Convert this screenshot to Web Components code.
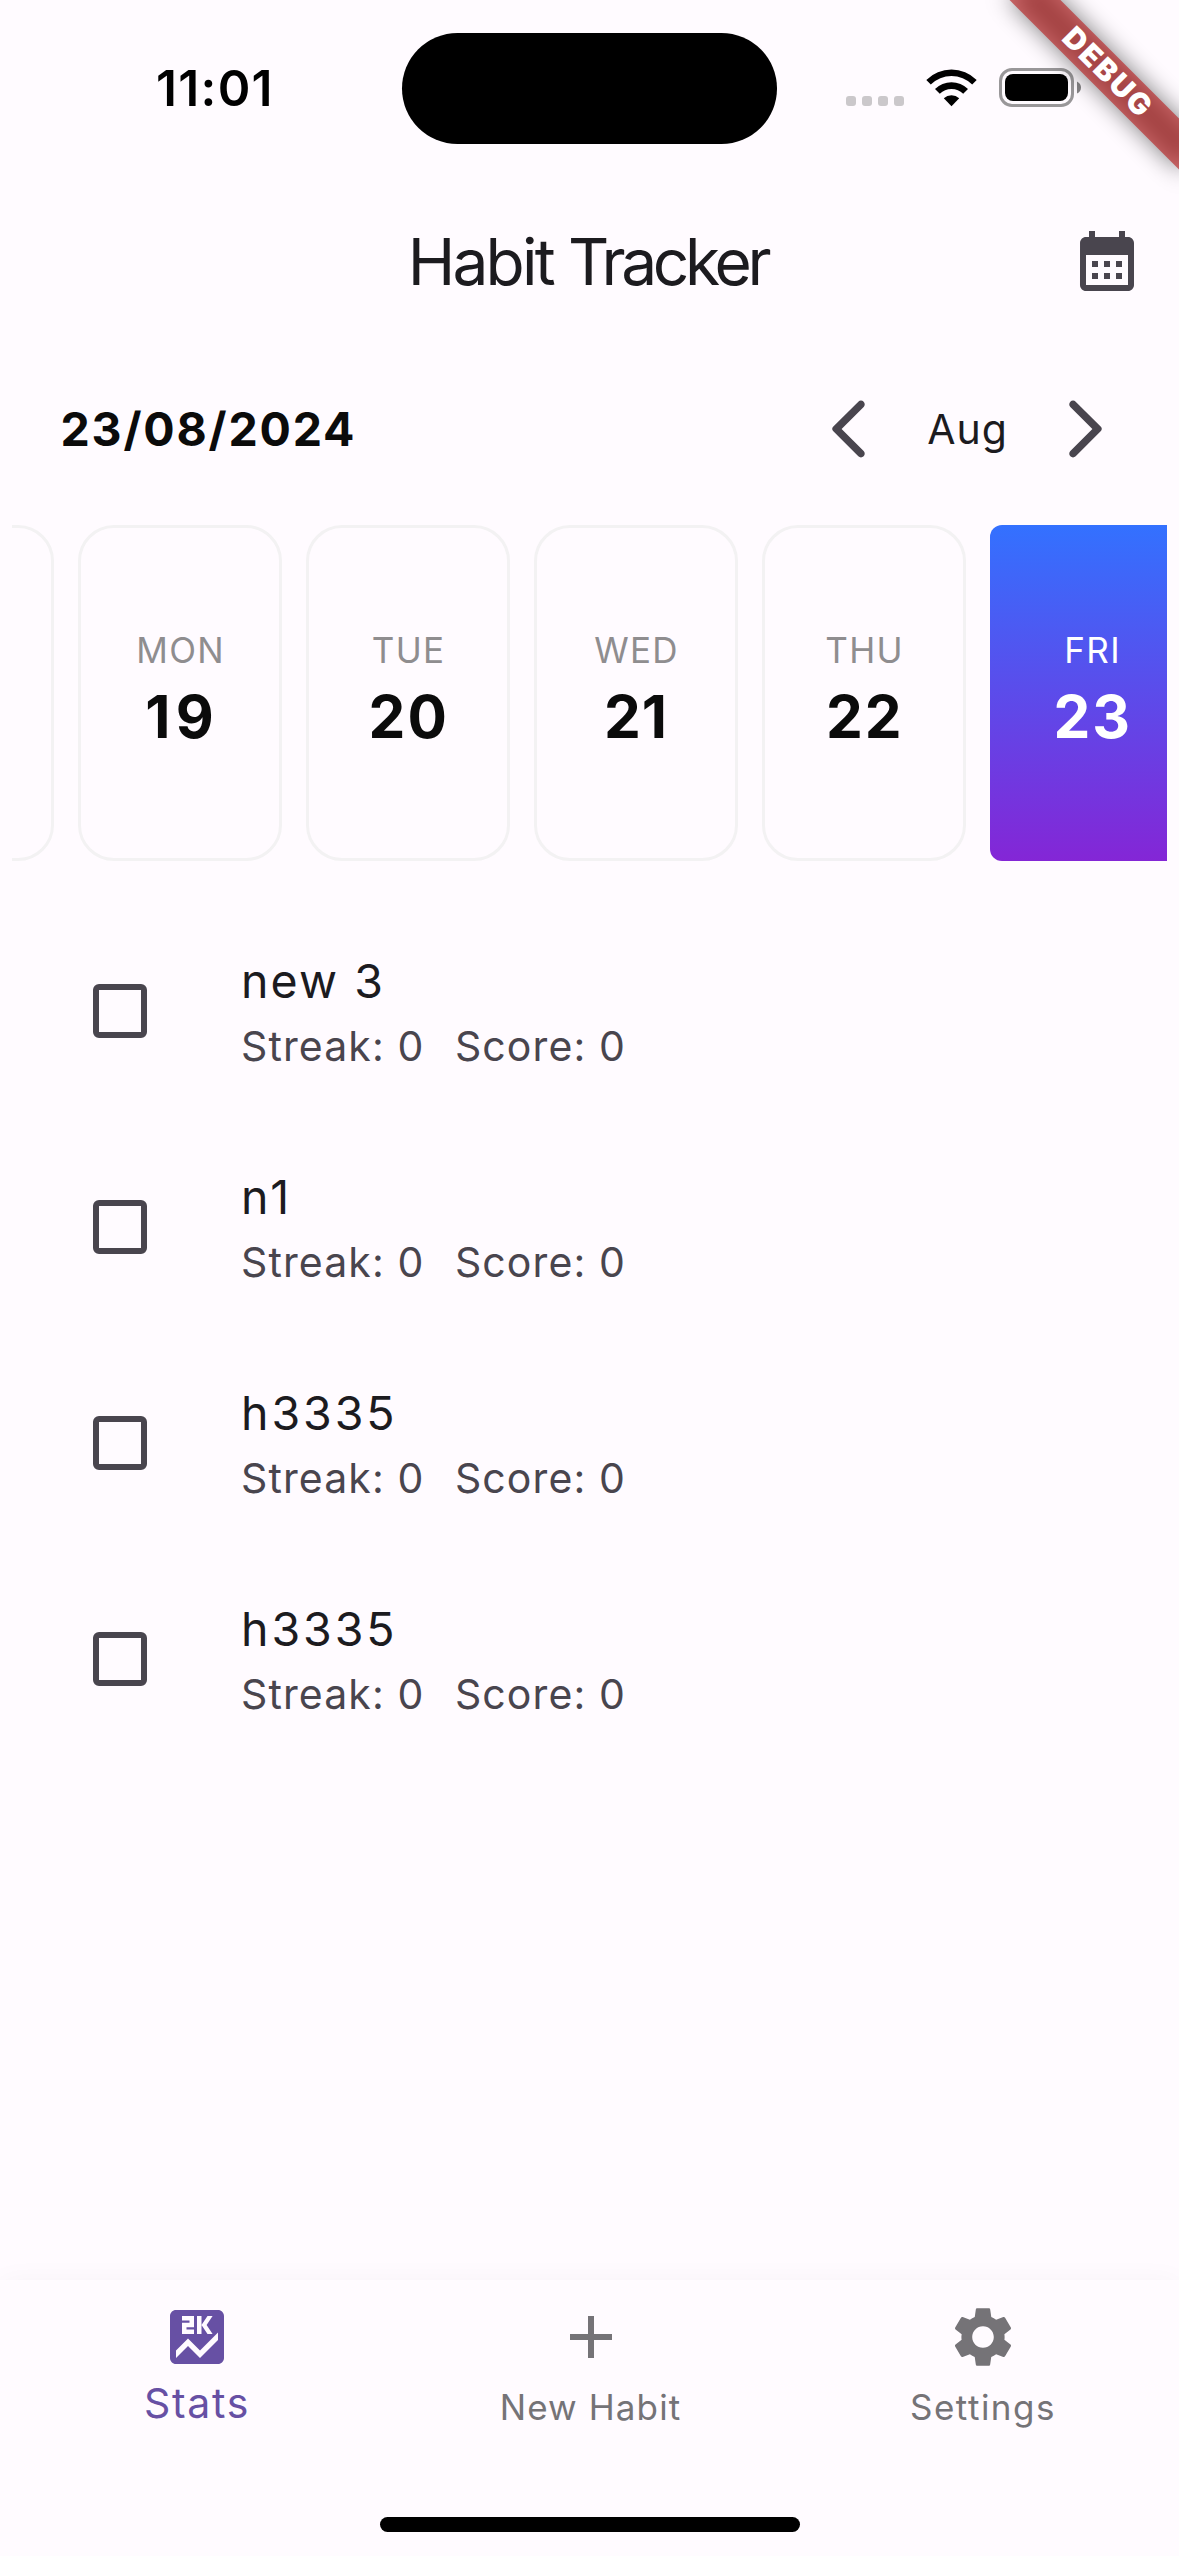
<!DOCTYPE html>
<html lang="en">
<head>
<meta charset="utf-8">
<title>Habit Tracker</title>
<style>
  html, body { margin: 0; padding: 0; background: #fffbff; }
  body { font-family: Inter, "Liberation Sans", sans-serif; font-weight: 370; color: #1c1b1f; }
</style>
</head>
<body>
<habit-app></habit-app>
<script>
const define = (name, html, init) => {
  const tpl = document.createElement('template');
  tpl.innerHTML = html;
  customElements.define(name, class extends HTMLElement {
    connectedCallback() {
      if (this.shadowRoot) return;
      const root = this.attachShadow({ mode: 'open' });
      root.append(tpl.content.cloneNode(true));
      if (init) init(this, root);
    }
  });
};

/* 24-unit icons drawn at 72px */
const ICONS = {
  calendar: '<path d="M19 4h-1V2h-2v2H8V2H6v2H5c-1.11 0-1.99.9-1.99 2L3 20c0 1.1.89 2 2 2h14c1.1 0 2-.9 2-2V6c0-1.1-.9-2-2-2zm0 16H5V10h14v10zM9 14H7v-2h2v2zm4 0h-2v-2h2v2zm4 0h-2v-2h2v2zm-8 4H7v-2h2v2zm4 0h-2v-2h2v2zm4 0h-2v-2h2v2z"/>',
  back: '<path d="M16.88 2.88c-.49-.49-1.28-.49-1.77 0l-8.41 8.41c-.39.39-.39 1.02 0 1.41l8.41 8.41c.49.49 1.28.49 1.77 0s.49-1.28 0-1.77L9.54 12l7.35-7.35c.48-.49.48-1.28-.01-1.77z"/>',
  forward: '<path transform="matrix(-1 0 0 1 24 0)" d="M16.88 2.88c-.49-.49-1.28-.49-1.77 0l-8.41 8.41c-.39.39-.39 1.02 0 1.41l8.41 8.41c.49.49 1.28.49 1.77 0s.49-1.28 0-1.77L9.54 12l7.35-7.35c.48-.49.48-1.28-.01-1.77z"/>',
  score: '<path d="M19 3H5c-1.1 0-2 .9-2 2v14c0 1.1.9 2 2 2h14c1.1 0 2-.9 2-2V5c0-1.1-.9-2-2-2zm-7 2h1.5v3l2-3h1.7l-2 3 2 3h-1.7l-2-3v3H12V5zM7 7.25h2.5V6.5H7V5h4v3.75H8.5v.75H11V11H7V7.25zM19 13l-6 6-4-4-4 4v-2.5l4-4 4 4 6-6V13z"/>',
  add: '<path d="M19 13h-6v6h-2v-6H5v-2h6V5h2v6h6v2z"/>',
  settings: '<path d="M19.14 12.94c.04-.3.06-.61.06-.94 0-.32-.02-.64-.07-.94l2.03-1.58c.18-.14.23-.41.12-.61l-1.92-3.32c-.12-.22-.37-.29-.59-.22l-2.39.96c-.5-.38-1.03-.7-1.62-.94l-.36-2.54c-.04-.24-.24-.41-.48-.41h-3.84c-.24 0-.43.17-.47.41l-.36 2.54c-.59.24-1.13.57-1.62.94l-2.39-.96c-.22-.08-.47 0-.59.22L2.74 8.87c-.12.21-.08.47.12.61l2.03 1.58c-.05.3-.09.63-.09.94s.02.64.07.94l-2.03 1.58c-.18.14-.23.41-.12.61l1.92 3.32c.12.22.37.29.59.22l2.39-.96c.5.38 1.03.7 1.62.94l.36 2.54c.05.24.24.41.48.41h3.84c.24 0 .44-.17.47-.41l.36-2.54c.59-.24 1.13-.56 1.62-.94l2.39.96c.22.08.47 0 .59-.22l1.92-3.32c.12-.22.07-.47-.12-.61l-2.01-1.58zM12 15.6c-1.98 0-3.6-1.62-3.6-3.6s1.62-3.6 3.6-3.6 3.6 1.62 3.6 3.6-1.62 3.6-3.6 3.6z"/>'
};
define('app-icon', `
<style>:host{display:block;width:72px;height:72px;flex:none}svg{display:block;width:72px;height:72px;fill:currentColor}</style>
<svg viewBox="0 0 24 24"></svg>`,
  (el, root) => { root.querySelector('svg').innerHTML = ICONS[el.getAttribute('name')]; });

define('status-bar', `
<style>
:host{display:flex;align-items:center;height:177px;color:#000}
.side{width:402px;box-sizing:border-box;display:flex;align-items:center}
.time{padding:0 0 1px 156px;font-size:49.5px;font-weight:600;letter-spacing:1.33px;line-height:60px}
.island{width:375px;height:111px;border-radius:56px;background:#000;margin-top:.6px}
.right{padding-left:69px}
svg{display:block}
</style>
<div class="side time"><slot></slot></div>
<div class="island"></div>
<div class="side right">
<svg width="240" height="61" viewBox="846 58 240 61">
  <g fill="#cbc8cb"><rect x="846" y="96" width="10" height="10" rx="3"/><rect x="862" y="96" width="10" height="10" rx="3"/><rect x="878" y="96" width="10" height="10" rx="3"/><rect x="894" y="96" width="10" height="10" rx="3"/></g>
  <path d="M926.3 79.9A36 36 0 0 1 976.7 79.9L972.2 84.6A29.5 29.5 0 0 0 930.8 84.6Z"/>
  <path d="M935 89A23.3 23.3 0 0 1 968 89L963.2 93.7A16.6 16.6 0 0 0 939.8 93.7Z"/>
  <path d="M943.8 98.2A11.5 11.5 0 0 1 959.2 98.2L951.5 106.2Z"/>
  <rect x="1000.5" y="69.5" width="72" height="36" rx="11.5" fill="none" stroke="#999799" stroke-width="3"/>
  <rect x="1005" y="74" width="63" height="27" rx="8"/>
  <path fill="#858385" d="M1077 81.5Q1081 83.5 1081 87.5T1077 93.5Z"/>
</svg>
</div>`);

define('app-bar', `
<style>
:host{display:grid;grid-template-columns:1fr auto 1fr;align-items:center;height:168px;padding:0 36px}
h1{grid-column:2;margin:0;font-size:64px;font-weight:370;letter-spacing:-2.8px;line-height:80px;padding:1px 4px 0 0}
::slotted(span){letter-spacing:-4.3px}
app-icon{justify-self:end;color:#49454e}
</style>
<h1><slot></slot></h1><app-icon name="calendar"></app-icon>`);

define('month-header', `
<style>
:host{display:flex;align-items:center;justify-content:space-between;height:168px;padding:0 58px 0 60.5px}
.date{font-size:46.5px;font-weight:700;letter-spacing:1.82px;color:#0b0b0b;line-height:60px}
.picker{display:flex;align-items:center;color:#49454e}
.month{box-sizing:border-box;width:164.5px;padding-left:1.5px;text-align:center;font-size:41px;letter-spacing:.9px;line-height:54px;color:#1c1b1f}
</style>
<div class="date"><slot name="date"></slot></div>
<div class="picker"><app-icon name="back"></app-icon><div class="month"><slot name="month"></slot></div><app-icon name="forward"></app-icon></div>`);

define('day-card', `
<style>
:host{display:block;flex:none;box-sizing:border-box;width:204px;height:336px;border:3px solid #f3f2f3;border-radius:36px;padding-top:96px;text-align:center}
:host([active]){border:0;padding-top:99px;border-radius:12px;background:linear-gradient(#3371ff,#8426d6);--day:#fff;--num:#fff}
.day{font-size:35px;line-height:52px;letter-spacing:1.3px;padding-left:1.2px;color:var(--day,#8f8d8f)}
.num{margin-top:4.5px;font-size:58.5px;font-weight:700;line-height:72px;letter-spacing:var(--ls,2px);padding-left:var(--pad,1.5px);color:var(--num,#0b0b0b)}
</style>
<div class="day"><slot name="day"></slot></div><div class="num"><slot></slot></div>`);

define('day-strip', `
<style>
:host{display:flex;gap:24px;margin:12px 12px 0;overflow:hidden;height:336px}
::slotted(:first-child){margin-left:-162px}
</style><slot></slot>`);

define('habit-row', `
<style>
:host{display:flex;align-items:center;height:216px;padding-left:93px;gap:94px}
.box{box-sizing:border-box;width:54px;height:54px;border:6px solid #49454e;border-radius:6px}
.name{font-size:46.5px;line-height:70px;letter-spacing:var(--ls,2.1px)}
.meta{display:flex;gap:30.5px;font-size:41px;line-height:60px;letter-spacing:1.1px;color:#49454e}
</style>
<div class="box"></div>
<div><div class="name"><slot></slot></div>
<div class="meta"><span>Streak: <slot name="streak">0</slot></span><span>Score: <slot name="score">0</slot></span></div></div>`);

define('nav-item', `
<style>
:host{display:flex;flex-direction:column;align-items:center;padding-top:21px;color:#757377}
:host([selected]){color:#6750a4}
.label{margin-top:7px;font-size:35px;line-height:54px;letter-spacing:var(--ls,1.1px)}
:host([selected]) .label{margin-top:3px;font-size:41px;letter-spacing:1.7px}
</style>
<app-icon></app-icon><div class="label"><slot></slot></div>`,
  (el, root) => {
    const old = root.querySelector('app-icon');
    const icon = document.createElement('app-icon');
    icon.setAttribute('name', el.getAttribute('icon'));
    old.replaceWith(icon);
  });

define('bottom-nav', `
<style>
:host{display:flex;flex-direction:column;justify-content:space-between;box-sizing:border-box;height:276.5px;padding-bottom:24px;background:#fffbff;box-shadow:0 0 26px rgba(60,20,60,.035)}
nav{display:grid;grid-template-columns:394px 393px 392px}
.home{width:420px;height:15px;border-radius:8px;background:#000;margin:0 0 0 380px}
</style>
<nav><slot></slot></nav><div class="home"></div>`);

define('debug-banner', `
<style>
:host{position:absolute;top:0;right:0;width:260px;height:260px;overflow:hidden;pointer-events:none}
.wrap{position:absolute;left:68px;top:54px;width:240px;height:36px;transform:rotate(45deg)}
.shade,.band{position:absolute;inset:0}
.shade{background:rgba(0,0,0,.5);filter:blur(11.5px)}
.band{background:rgba(183,28,28,.627);color:#fff;font-size:29.8px;font-weight:900;letter-spacing:2px;line-height:35px;text-align:center;padding-left:2px}
</style>
<div class="wrap"><div class="shade"></div><div class="band"><slot></slot></div></div>`);

define('habit-app', `
<style>
:host{display:flex;flex-direction:column;position:relative;width:1179px;height:2556px;overflow:hidden;background:#fffbff}
.list{flex:1;padding-top:42px}
</style>
<status-bar>11:01</status-bar>
<app-bar>Habit <span>Tracker</span></app-bar>
<month-header><span slot="date">23/08/2024</span><span slot="month">Aug</span></month-header>
<day-strip>
<day-card></day-card>
<day-card style="--ls:5.4px;--pad:4.5px"><span slot="day">MON</span>19</day-card>
<day-card><span slot="day">TUE</span>20</day-card>
<day-card style="--ls:1px;--pad:0px"><span slot="day">WED</span>21</day-card>
<day-card><span slot="day">THU</span>22</day-card>
<day-card active><span slot="day">FRI</span>23</day-card>
</day-strip>
<div class="list">
<habit-row>new 3</habit-row>
<habit-row style="--ls:3.6px">n1</habit-row>
<habit-row style="--ls:2.9px">h3335</habit-row>
<habit-row style="--ls:2.9px">h3335</habit-row>
</div>
<bottom-nav>
<nav-item icon="score" selected>Stats</nav-item>
<nav-item icon="add">New Habit</nav-item>
<nav-item icon="settings" style="--ls:1.5px">Settings</nav-item>
</bottom-nav>
<debug-banner>DEBUG</debug-banner>`);
</script>
</body>
</html>
